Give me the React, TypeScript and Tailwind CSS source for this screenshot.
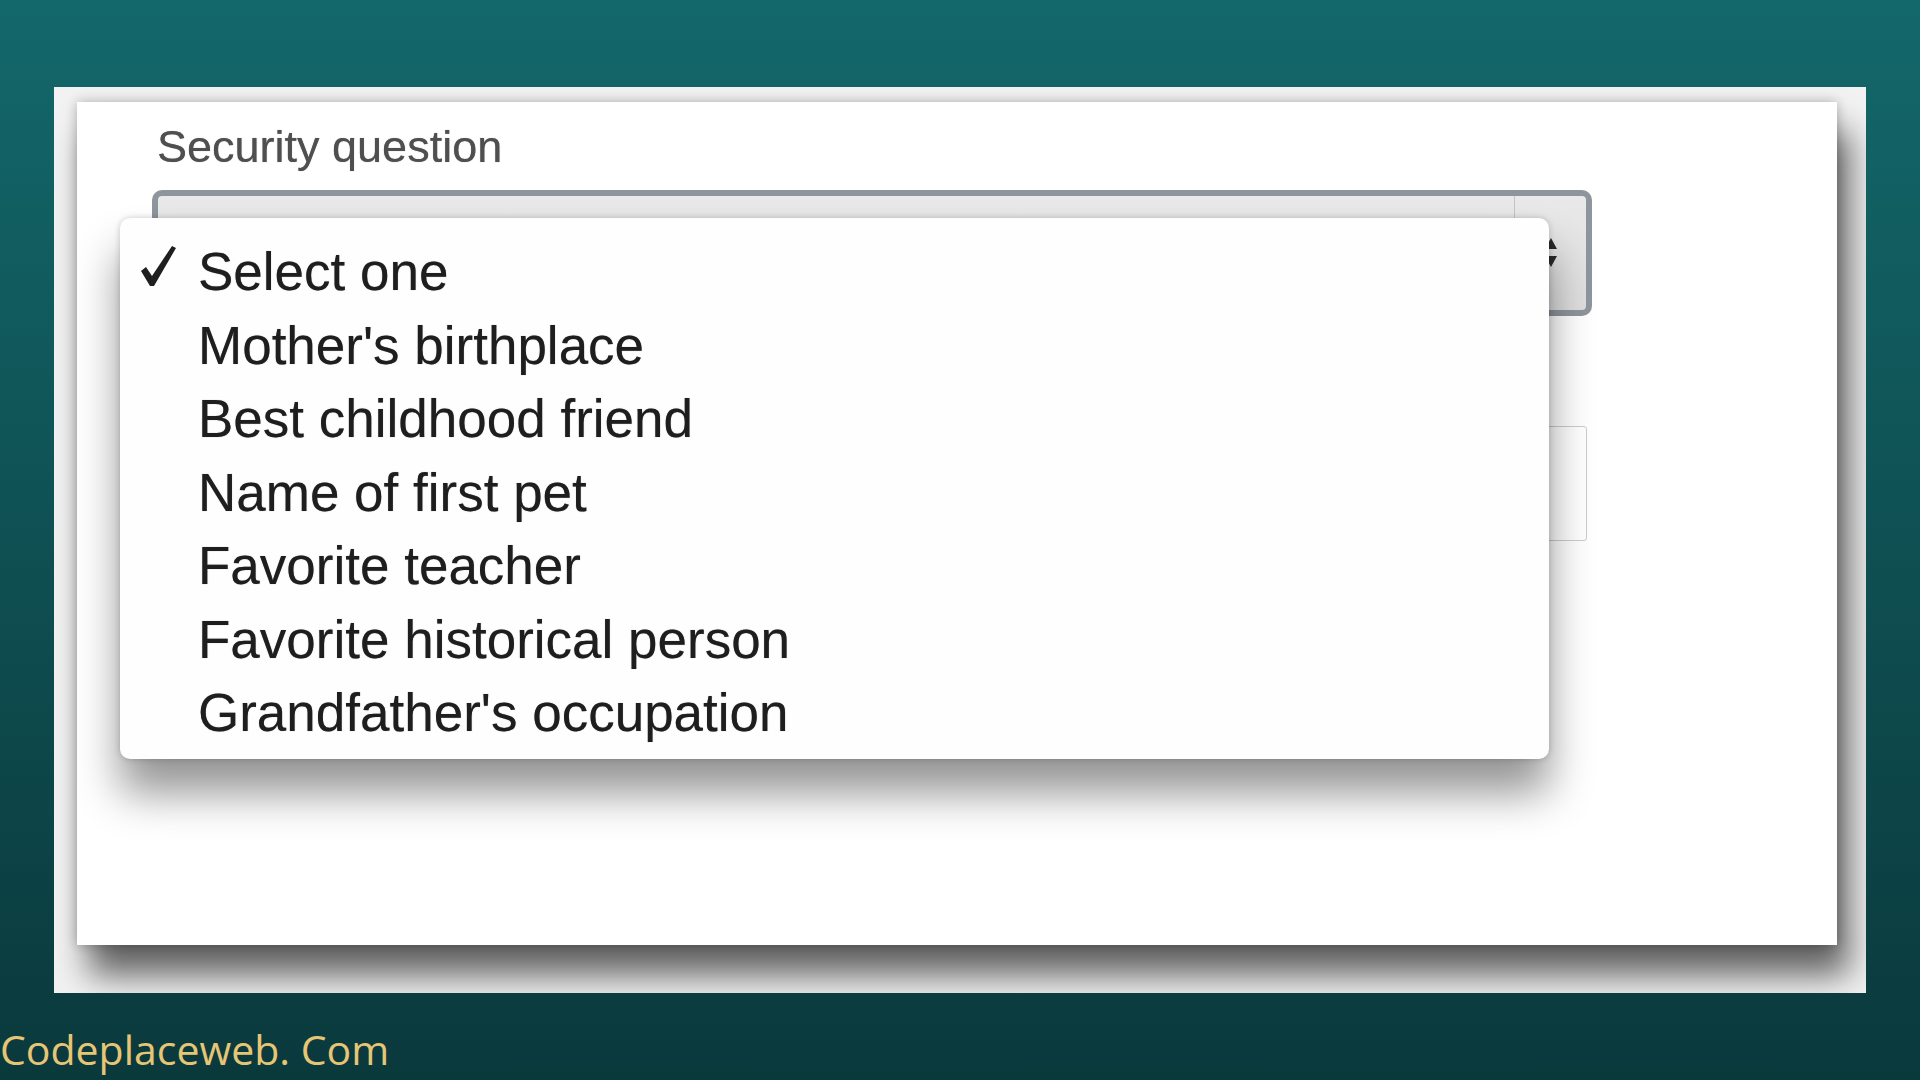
import React from 'react'

const questions = [
  'Select one',
  "Mother's birthplace",
  'Best childhood friend',
  'Name of first pet',
  'Favorite teacher',
  'Favorite historical person',
  "Grandfather's occupation",
]

const CheckMark = () => (
  <svg viewBox="0 0 35 40" className="w-[35px] h-[40px]" fill="#1f1f1f">
    <path d="M0 25 L5 21 L11 30 L31 0 L35 2 L13 40 L9 40 Z" />
  </svg>
)

const UpDownArrows = () => (
  <svg viewBox="0 0 14 30" className="w-[14px] h-[30px]" fill="#2b2b2b">
    <path d="M7 0 L13 11 L1 11 Z" />
    <path d="M1 18 L13 18 L7 29 Z" />
  </svg>
)

export default function App() {
  return (
    <div className="w-[1920px] h-[1080px] overflow-hidden bg-gradient-to-b from-[#13686b] to-[#0a393c] pt-[87px]">
      {/* screenshot frame */}
      <div className="ml-[54px] w-[1812px] h-[906px] bg-[#f2f2f2] overflow-hidden pl-[23px] pt-[15px]">
        <div className="relative w-[1760px] h-[843px] bg-white pl-[75px] pt-[22px] shadow-[0_0_12px_rgba(0,0,0,0.28),12px_30px_32px_rgba(0,0,0,0.6)] blur-[0.7px] font-['Liberation_Sans',Arial,sans-serif] [text-shadow:0_0_0.8px_rgba(0,0,0,0.55)]">
          <div className="ml-[5px] text-[45px] leading-none text-[#4f4f4f]">Security question</div>

          {/* select box under the open menu */}
          <div className="mt-[21px] w-[1440px] h-[126px] rounded-[10px] border-[6px] border-[#8e959c] bg-gradient-to-b from-[#e9e9e9] to-[#dedede] flex justify-end">
            <div className="w-[72px] border-l border-[#c4c4c4] flex items-center justify-center">
              <UpDownArrows />
            </div>
          </div>

          {/* next input */}
          <div className="mt-[110px] w-[1435px] h-[115px] border border-[#cdcdcd] rounded-[3px] bg-white" />

          {/* open dropdown */}
          <div className="absolute left-[43px] top-[116px] w-[1429px] h-[541px] rounded-[10px] bg-[#fefefe] pt-[17px] shadow-[0_0_6px_rgba(0,0,0,0.2),0_34px_44px_rgba(0,0,0,0.42)]">
            {questions.map((q, i) => (
              <div key={q} className="h-[73.5px] flex items-center">
                <div className="w-[78px] pl-[21px] flex items-center -mt-[12px]">
                  {i === 0 && <CheckMark />}
                </div>
                <span className="text-[53px] leading-none text-[#1e1e1e] whitespace-nowrap">{q}</span>
              </div>
            ))}
          </div>
        </div>
      </div>

      <div className="mt-[36px] text-[41px] leading-none text-[#e6c674] font-['Open_Sans',sans-serif]">
        Codeplaceweb. Com
      </div>
    </div>
  )
}
